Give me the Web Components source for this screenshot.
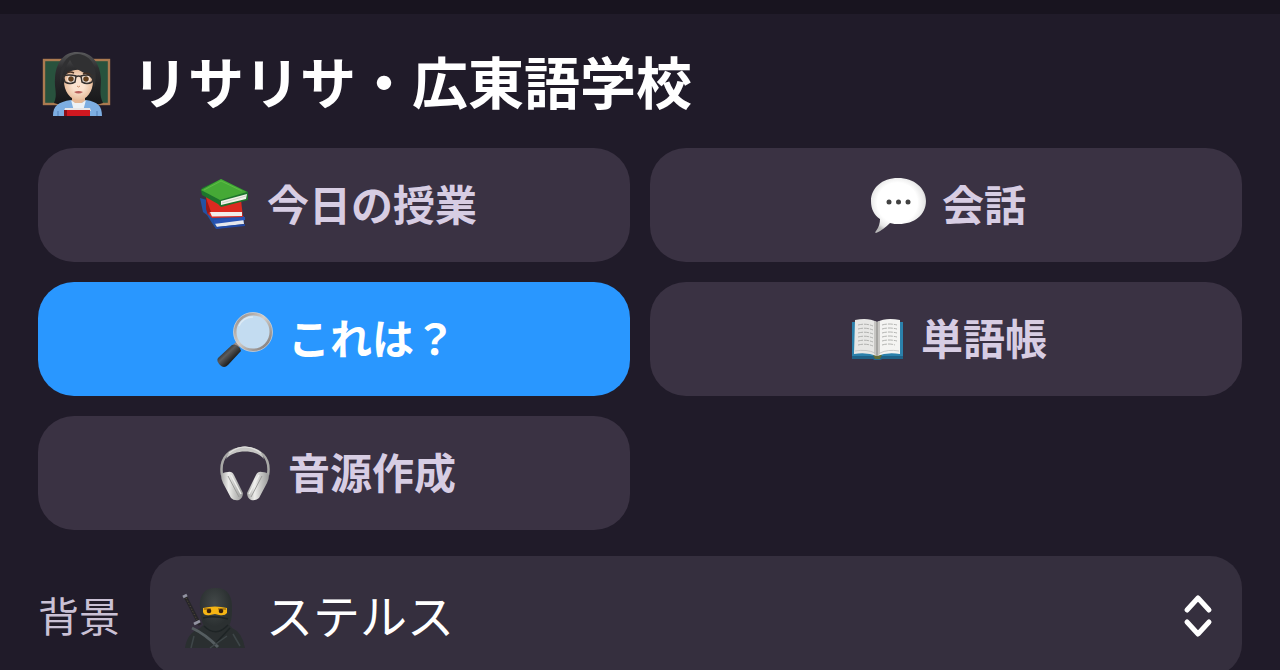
<!DOCTYPE html>
<html lang="ja">
<head>
<meta charset="utf-8">
<meta name="viewport" content="width=device-width, initial-scale=1">
<title>リサリサ・広東語学校</title>
<style>
  html { background: #201b29; }
  body { margin: 0; font-family: "Noto Sans CJK JP", "Noto Sans", sans-serif; color: #fff; }
</style>
</head>
<body>
<school-app></school-app>

<script>
const ICONS = {
  teacher: `<svg viewBox="0 0 76 76" aria-hidden="true">
    <defs>
      <linearGradient id="hair" x1="0" y1="0" x2="0" y2="1"><stop offset="0" stop-color="#5a5a5c"/><stop offset=".3" stop-color="#2e2e30"/><stop offset="1" stop-color="#171719"/></linearGradient>
      <radialGradient id="skin"><stop offset=".4" stop-color="#fbe3cf"/><stop offset="1" stop-color="#e8bd9c"/></radialGradient>
    </defs>
    <rect x="6" y="14" width="65" height="44" fill="#28523d" stroke="#ab7a50" stroke-width="2.4"/>
    <path d="M16 57C20 48 16 43 17 32C18 16 26 6 39 6C54 6 62 17 63 33C63 43 61 49 65 57Q57 60 49 57L32 57Q24 60 16 57Z" fill="url(#hair)"/>
    <path d="M34 46H47V60H34Z" fill="#e5b795"/>
    <path d="M15 70C15 60 20 56 33 54L40 60L48 54C60 56 64 60 64 70Z" fill="#7daee2"/>
    <path d="M33 54L36 65H45L48 54L44 57H37Z" fill="#edf1f5"/>
    <path d="M20 70V65M59 70V65" stroke="#527eb5"/>
    <path d="M26 35C26 20 54 20 55 35C55 45 49 54 40.500 54C32 54 26 45 26 35Z" fill="url(#skin)"/>
    <path d="M23 39C23 28 28 20 32 14C36 23 45 26 51 30C55 33 56 38 56 42C62 22 53 9 40 8C27 8 20 23 23 39Z" fill="#303032"/>
    <path d="M29 27Q32 25 36 27M45 28Q49 26 53 29" fill="none" stroke="#453023" stroke-width="1.4"/>
    <ellipse cx="33" cy="33" rx="3.5" ry="3.6" fill="#fff"/><circle cx="33" cy="33" r="2.8" fill="#64401e"/>
    <ellipse cx="48" cy="33" rx="3.5" ry="3.6" fill="#fff"/><circle cx="48" cy="33" r="2.8" fill="#64401e"/>
    <g fill="none" stroke="#35312f" stroke-width="1.5"><path d="M25 30Q31 28 38 30L37 36Q32 39 27 36Z"/><path d="M43 30Q49 28 56 30L54 36Q49 39 44 36ZM38 31Q40.5 29 43 31"/></g>
    <path d="M39 40Q40.5 42 42 40" fill="none" stroke="#c98d69"/>
    <path d="M36 46Q40.5 44 45 46Q40.5 49 36 46Z" fill="#b9605b"/>
    <path d="M27 62H52L53 65H26Z" fill="#e8e5e6"/><path d="M26 64H52V70H26Z" fill="#cf1820"/><path d="M26 64H29V70H26Z" fill="#8a1019"/>
  </svg>`,
  books: `<svg viewBox="0 0 64 64" aria-hidden="true">
    <path d="M9 25L16 27L22 44L53 43V51L25 56L21 50L16 42L12 39Z" fill="#2352a3"/>
    <path d="M23 49L52 45L53 51L26 54Z" fill="#e5e7ec"/>
    <path d="M23 47L54 44L54 47L23 51Z" fill="#2853b5"/><path d="M25 54L54 51V53L25 56Z" fill="#2148a3"/>
    <path d="M15 24L50 27L52 44L21 45L17 41Z" fill="#dc2a20"/>
    <path d="M19 39L51 39L51 43L21 43.500Z" fill="#f1eeeb"/>
    <path d="M15 25L20 39H18L17 42L15 36Z" fill="#9c1914"/>
    <path d="M10 17L11 15L30 6L55 18L57 19V27L30 34L27 31L11 22Z" fill="#1d742c"/>
    <path d="M10 17L30 6L56 19L29 27Z" fill="#45a936"/>
    <path d="M13 17L30 8L51 18" fill="none" stroke="#65bf49" stroke-width=".8"/>
    <path d="M30 28L56 21L55 26L30 32Z" fill="#f1f3e9"/>
    <path d="M31 30L55 23" stroke="#b7bbb0" stroke-width=".6"/>
  </svg>`,
  speech: `<svg viewBox="0 0 64 64" aria-hidden="true">
    <defs><radialGradient id="bubble" cx=".48" cy=".45" r=".56"><stop offset=".65" stop-color="#fff"/><stop offset=".88" stop-color="#e7e7e7"/><stop offset="1" stop-color="#b9b9b9"/></radialGradient></defs>
    <path d="M32 5C48 5 60 15 60 28C60 42 48 51 33 51C30 51 27 51 24 50C20 54 15 58 10 60C9 60 9 59 10 58C13 54 14 50 14 46C8 42 5 36 5 28C5 15 16 5 32 5Z" fill="url(#bubble)"/>
    <g fill="#424242"><circle cx="23" cy="29" r="2.5"/><circle cx="32.500" cy="29" r="2.500"/><circle cx="42" cy="29" r="2.500"/></g>
  </svg>`,
  magnifier: `<svg viewBox="0 0 64 64" aria-hidden="true">
    <defs>
      <linearGradient id="handle" x1="0" y1="0" x2="1" y2="1"><stop offset=".15" stop-color="#111"/><stop offset=".42" stop-color="#5b5b5b"/><stop offset=".65" stop-color="#222"/><stop offset="1" stop-color="#111"/></linearGradient>
      <linearGradient id="rim" x1="0" y1="0" x2="1" y2="1"><stop stop-color="#8e8582"/><stop offset=".45" stop-color="#d2ceca"/><stop offset="1" stop-color="#77706e"/></linearGradient>
    </defs>
    <path d="M23 40L28 35" stroke="#9b8e8b" stroke-width="6"/>
    <path d="M20 38Q24 36 28 41L29 44L16 58Q12 62 8 58Q4 54 6 51Z" fill="url(#handle)"/>
    <circle cx="41" cy="25" r="18" fill="#c3dcf1" stroke="url(#rim)" stroke-width="3"/>
    <circle cx="41" cy="25" r="19.500" fill="none" stroke="#ddd9d6" stroke-width=".7"/>
    <path d="M27 19Q31 10 41 10" fill="none" stroke="#dceaf5" stroke-width="1.500"/>
  </svg>`,
  openBook: `<svg viewBox="0 0 64 64" aria-hidden="true">
    <path d="M7 15H58V52H37Q32 54 28 52H7Z" fill="#2b81ac"/>
    <path d="M7 49H58V52H37Q32 54 28 52H7Z" fill="#1f6288"/>
    <path d="M28 48H37L35 52H30Z" fill="#636d36"/>
    <path d="M10 13Q23 10 32 15V49Q22 45 9 47Z" fill="#e7e7e5"/>
    <path d="M55 13Q41 10 32 15V49Q42 45 55 47Z" fill="#f4f4f2"/>
    <path d="M29 14L32 15V49L29 47ZM35 14L32 15V49L35 47Z" fill="#c6c5c2"/>
    <path d="M32 15V49" stroke="#747371" stroke-width=".8"/>
    <g fill="none" stroke="#a2a3a1" stroke-width=".8" stroke-dasharray="5 1">
      <path d="M13 18Q21 16 28 19M13 22Q21 20 28 23M13 26Q21 24 28 27M13 30Q21 28 28 31M13 34Q21 32 28 35M13 38Q21 36 28 39"/>
      <path d="M37 18Q44 16 52 18M37 22Q44 20 52 22M37 26Q44 24 52 26M37 30Q44 28 52 30M37 34Q44 32 52 34M37 38Q44 36 50 38"/>
    </g>
    <path d="M10 44Q22 42 30 46M35 46Q43 42 54 44" fill="none" stroke="#bebfbe" stroke-width=".8"/>
  </svg>`,
  headphones: `<svg viewBox="0 0 64 64" aria-hidden="true">
    <defs><linearGradient id="cup" x1="0" y1="0" x2="1" y2="0"><stop stop-color="#a5a5a4"/><stop offset=".35" stop-color="#ededeb"/><stop offset=".6" stop-color="#c9c9c7"/><stop offset="1" stop-color="#999"/></linearGradient></defs>
    <path d="M10 34C7 16 18 7 33 7C48 7 59 16 56 34" fill="none" stroke="#a9a9a7" stroke-width="2.500"/>
    <path d="M14 18C22 8 44 8 52 18L50 13C41 3 25 3 16 13Z" fill="#c5c5c3"/>
    <path d="M17 12Q33 0 49 12" fill="none" stroke="#e2e2e0" stroke-width="1.200"/>
    <path d="M9 34Q11 31 16 31Q20 30 22 34L31 52Q31 57 27 59Q22 60 19 57L11 42Q9 38 9 34Z" fill="url(#cup)"/>
    <path d="M57 34Q55 31 50 31Q46 30 44 34L35 52Q35 57 39 59Q44 60 47 57L55 42Q57 38 57 34Z" fill="url(#cup)"/>
    <path d="M16 35L27 56M50 35L39 56" stroke="#9a9a98" stroke-width="1"/>
    <path d="M19 34L29 53M47 34L37 53" stroke="#efefed" stroke-width="1.500"/>
  </svg>`,
  ninja: `<svg viewBox="0 0 72 72" aria-hidden="true">
    <defs><radialGradient id="hood" cx=".45" cy=".35"><stop stop-color="#434949"/><stop offset="1" stop-color="#2b3031"/></radialGradient></defs>
    <path d="M6 14L21 43" stroke="#272629" stroke-width="3.500"/><path d="M7 16L18 38" stroke="#5b513b" stroke-width="1" stroke-dasharray="1 2"/>
    <path d="M4 15L8 13M15 42L21 39" stroke="#9293a1" stroke-width="3"/>
    <path d="M6 66Q8 51 21 46L28 39H47L53 46Q63 50 66 66Z" fill="#2a2f30"/>
    <path d="M21 26C20 11 27 6 37 6C49 6 54 14 53 29C53 41 50 49 38 51C25 50 22 42 21 26Z" fill="url(#hood)"/>
    <path d="M24 26Q36 23 48 26V31Q46 34 40 33L36 32L31 33Q25 34 24 30Z" fill="#f5b514"/>
    <circle cx="30" cy="29" r="2.300" fill="#38220c"/><circle cx="42" cy="29" r="2.300" fill="#38220c"/>
    <path d="M25 27L32 27M39 27L47 27" stroke="#5c3b0c" stroke-width=".8"/>
    <path d="M24 36Q35 33 49 37M25 44Q37 56 49 43M51 46L37 61" fill="none" stroke="#1e2425" stroke-width="1.500"/>
    <path d="M13 46Q26 52 39 65" fill="none" stroke="#555d60" stroke-width="3"/>
    <path d="M48 54L31 66M54 52L61 64M15 54L12 66" stroke="#3e4648" stroke-width="1.500"/>
  </svg>`,
  chevrons: `<svg viewBox="0 0 32 48" aria-hidden="true"><path d="M5 18L16 6L27 18M5 30L16 42L27 30" fill="none" stroke="#fff" stroke-width="5" stroke-linecap="round" stroke-linejoin="round"/></svg>`
};

class EmojiIcon extends HTMLElement {
  connectedCallback() {
    if (this.shadowRoot) return;
    this.attachShadow({ mode: "open" }).innerHTML = `
      <style>
        :host { display: block; flex: none; width: 64px; height: 64px; }
        svg { display: block; width: 100%; height: 100%; }
      </style>${ICONS[this.getAttribute("name")]}`;
  }
}

class SchoolHeading extends HTMLElement {
  connectedCallback() {
    if (this.shadowRoot) return;
    this.attachShadow({ mode: "open" }).innerHTML = `
      <style>
        :host { display: block; }
        h1 { display: flex; align-items: flex-start; gap: 18px; margin: 0; font-size: 56px; line-height: 68px; font-weight: 700; white-space: nowrap; }
        emoji-icon { width: 76px; height: 76px; }
      </style>
      <h1><emoji-icon name="teacher"></emoji-icon><slot></slot></h1>`;
  }
}

class MenuButton extends HTMLElement {
  connectedCallback() {
    if (this.shadowRoot) return;
    this.attachShadow({ mode: "open" }).innerHTML = `
      <style>
        :host { display: block; min-width: 0; }
        button { display: flex; align-items: flex-start; justify-content: center; gap: 12px; width: 100%; height: 114px; margin: 0; padding: 25px 0; border: 0; border-radius: 36px; background: #3a3243; color: #d7cde3; font: inherit; font-size: 42px; line-height: 60px; font-weight: 700; white-space: nowrap; cursor: pointer; }
        :host([active]) button { background: #2997ff; color: #fff; }
      </style>
      <button type="button"><emoji-icon name="${this.getAttribute("icon")}"></emoji-icon><span><slot></slot></span></button>`;
    if (this.hasAttribute("active")) this.shadowRoot.querySelector("button").setAttribute("aria-pressed", "true");
  }
}

class BackgroundPicker extends HTMLElement {
  connectedCallback() {
    if (this.shadowRoot) return;
    this.attachShadow({ mode: "open" }).innerHTML = `
      <style>
        :host { display: flex; align-items: center; gap: 30px; }
        label { flex: none; color: #cac1d5; font-size: 41px; line-height: 64px; padding-bottom: 4px; }
        .field { position: relative; flex: 1; min-width: 0; }
        select { appearance: none; display: block; box-sizing: border-box; width: 100%; height: 120px; margin: 0; padding: 0 80px 4px 116px; border: 0; border-radius: 32px; background: #352f3e; color: #fff; font: inherit; font-size: 47px; line-height: 72px; }
        .glyph { position: absolute; top: 26px; left: 29px; width: 72px; height: 72px; pointer-events: none; }
        .arrows { position: absolute; top: 36px; right: 28px; width: 32px; height: 48px; pointer-events: none; }
      </style>
      <label for="background">背景</label>
      <div class="field">
        <select id="background"><option>ステルス</option></select>
        <emoji-icon class="glyph" name="ninja"></emoji-icon>
        <emoji-icon class="arrows" name="chevrons"></emoji-icon>
      </div>`;
  }
}

class SchoolApp extends HTMLElement {
  connectedCallback() {
    if (this.shadowRoot) return;
    this.attachShadow({ mode: "open" }).innerHTML = `
      <style>
        :host { display: block; border-top: 14px solid #18141f; background: #201b29; }
        main { display: flex; flex-direction: column; gap: 26px; padding: 32px 38px; }
        nav { display: grid; grid-template-columns: repeat(2, minmax(0, 1fr)); gap: 20px; }
      </style>
      <main>
        <school-heading>リサリサ・広東語学校</school-heading>
        <nav>
          <menu-button icon="books">今日の授業</menu-button>
          <menu-button icon="speech">会話</menu-button>
          <menu-button icon="magnifier" active>これは？</menu-button>
          <menu-button icon="openBook">単語帳</menu-button>
          <menu-button icon="headphones">音源作成</menu-button>
        </nav>
        <background-picker></background-picker>
      </main>`;
  }
}

customElements.define("emoji-icon", EmojiIcon);
customElements.define("school-heading", SchoolHeading);
customElements.define("menu-button", MenuButton);
customElements.define("background-picker", BackgroundPicker);
customElements.define("school-app", SchoolApp);
</script>
</body>
</html>
